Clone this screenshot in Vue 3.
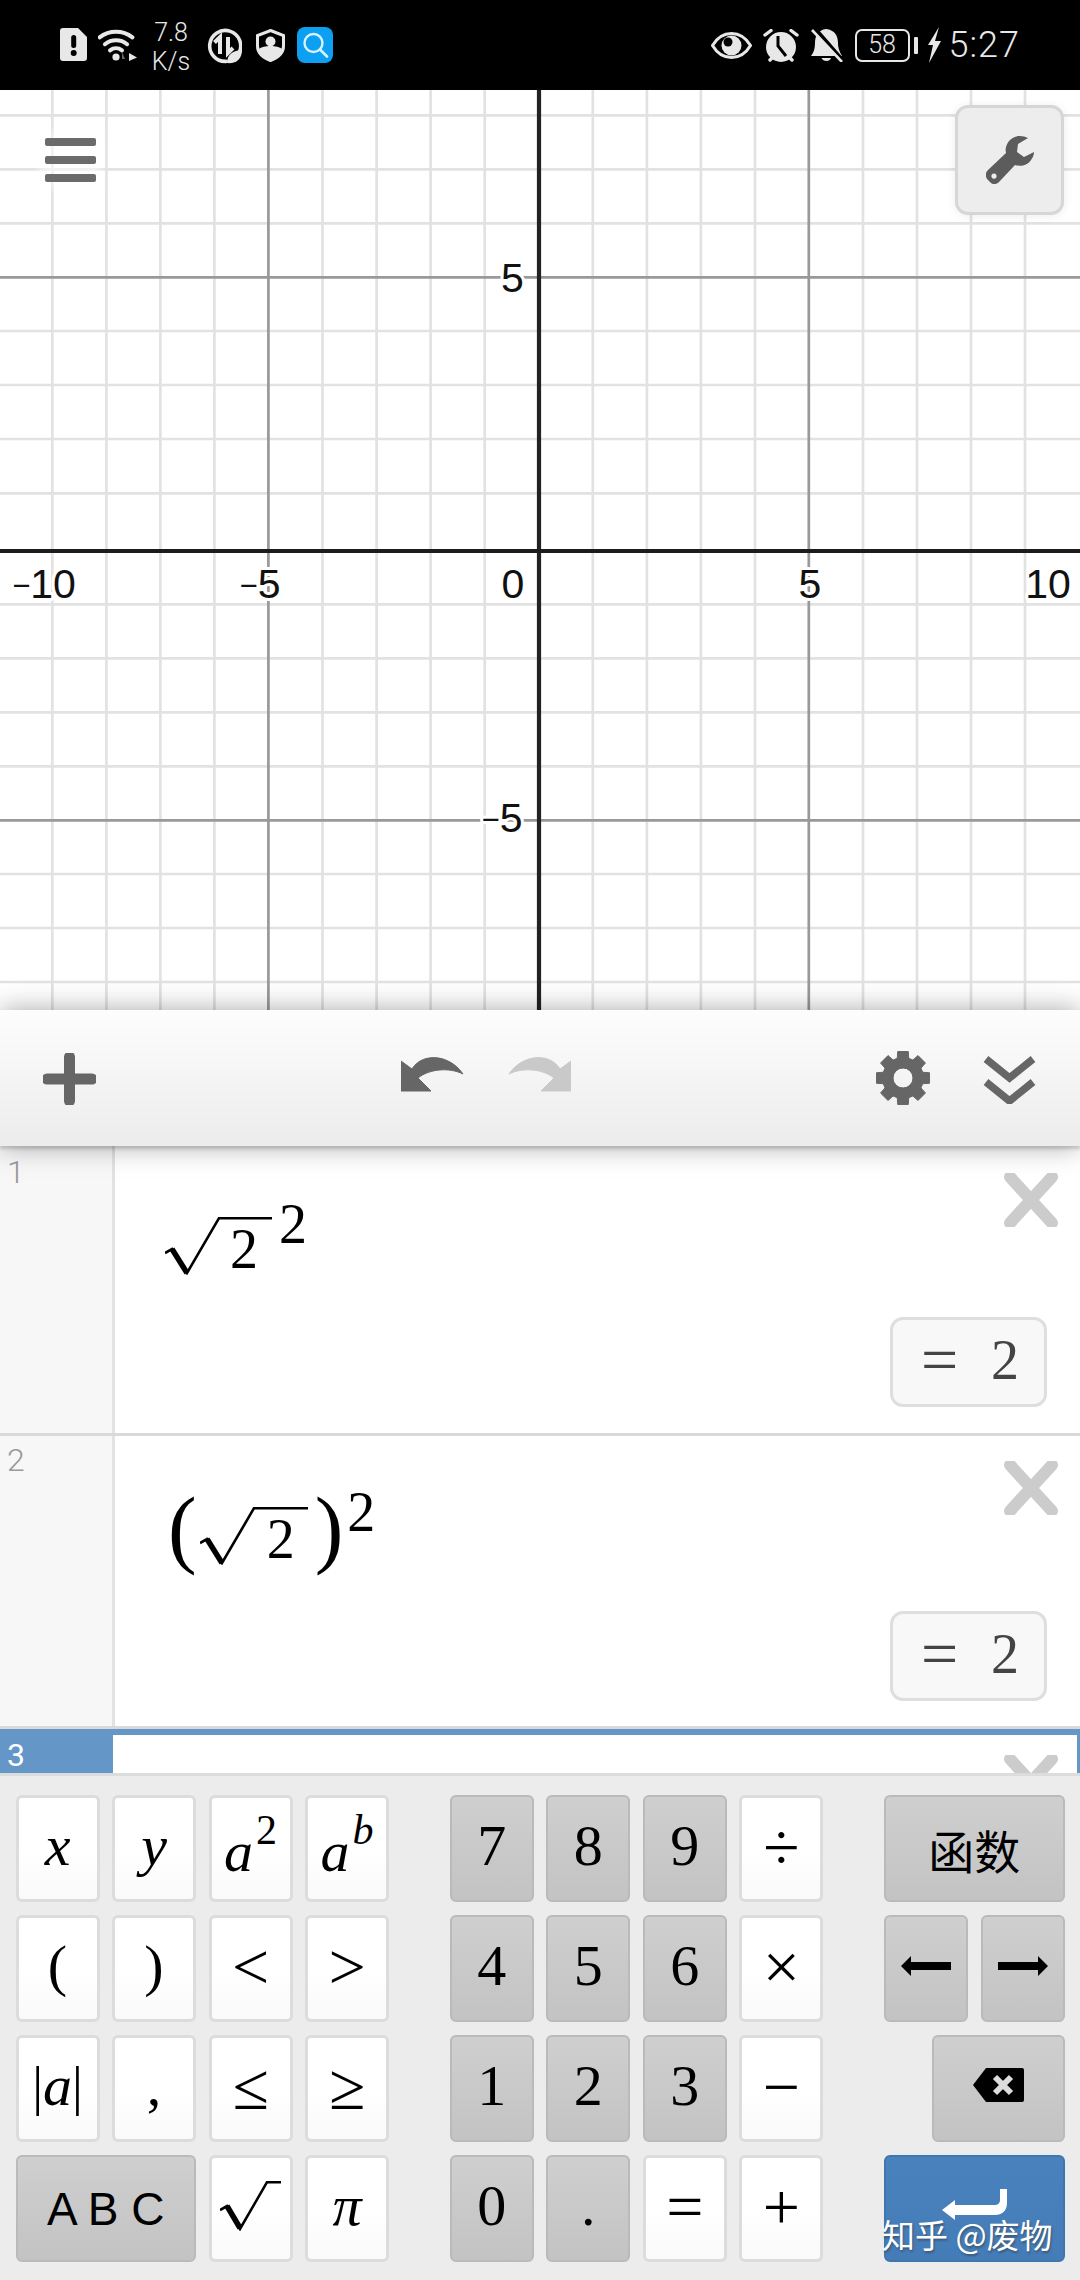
<script setup>
const verticalMinor = [52.3, 106.4, 160.4, 214.4, 322.5, 376.6, 430.6, 484.7, 592.8, 646.9, 700.9, 755, 863, 917, 971, 1025]
const verticalMajor = [268.4, 808.8]
const horizontalMinor = [115.3, 169.3, 223.3, 331, 385, 439, 493.4, 604.3, 658.3, 712.3, 766.3, 874, 928, 982]
const horizontalMajor = [277.4, 820.3]

const xLabels = [
  { t: '10', x: 44, neg: true },
  { t: '5', x: 260, neg: true },
  { t: '0', x: 513 },
  { t: '5', x: 810 },
  { t: '10', x: 1048 },
]
const yLabels = [
  { t: '5', x: 512.5, y: 292 },
  { t: '5', x: 502, y: 832, neg: true },
]

function gearPath() {
  const teeth = 8
  const c = 27
  let d = ''
  for (let i = 0; i < teeth; i++) {
    const a = (i / teeth) * Math.PI * 2 - Math.PI / 2
    const s = Math.PI / teeth
    const pts = [
      [a - s * 0.5, 27],
      [a + s * 0.5, 27],
      [a + s * 0.72, 20.5],
      [a + s * 1.28, 20.5],
    ]
    for (const [ang, r] of pts) {
      d += (d ? 'L' : 'M') + (c + r * Math.cos(ang)).toFixed(2) + ' ' + (c + r * Math.sin(ang)).toFixed(2)
    }
  }
  return d + 'Z M37 27 A10 10 0 1 0 17 27 A10 10 0 1 0 37 27Z'
}
const gear = gearPath()
</script>

<template>
  <div class="phone">
    <header class="status">
      <div class="status-left">
        <svg class="i-doc" width="27" height="33" viewBox="0 0 27 33">
          <path d="M3 0H18L27 9V30a3 3 0 0 1-3 3H3a3 3 0 0 1-3-3V3a3 3 0 0 1 3-3Z" fill="#e8e8e8" />
          <rect x="11.2" y="7" width="5" height="13" rx="2.5" fill="#000" />
          <circle cx="13.7" cy="25" r="3" fill="#000" />
        </svg>
        <svg class="i-wifi" width="40" height="33" viewBox="0 0 40 33">
          <g fill="none" stroke="#e8e8e8" stroke-width="4" stroke-linecap="round">
            <path d="M1.6 9.3A27 27 0 0 1 34.4 9.3" />
            <path d="M6.9 16.2A18 18 0 0 1 29.1 16.2" />
            <path d="M12 22.3A10 10 0 0 1 24 22.3" />
          </g>
          <circle cx="18" cy="29" r="3.6" fill="#e8e8e8" />
          <path d="M24 31V24L27 31Z" fill="#666" />
          <path d="M31 25L39 29.5L31 33Z" fill="#e8e8e8" />
        </svg>
        <div class="speed"><span>7.8</span><span>K/s</span></div>
        <svg class="i-data" width="36" height="36" viewBox="0 0 36 36">
          <path d="M33 25A15.5 15.5 0 1 0 20 33.4" fill="none" stroke="#e8e8e8" stroke-width="3.6" stroke-linecap="round" />
          <path d="M14 26V9L8.5 14.5M22 9V25L27 20" fill="none" stroke="#e8e8e8" stroke-width="4" />
          <path d="M21 35C21 27 27 22 36 22C36 31 30 36 21 35Z" fill="#e8e8e8" />
        </svg>
        <svg class="i-shield" width="29" height="33" viewBox="0 0 29 33">
          <path d="M14.5 1.5L27.5 6.5V17C27.5 25 20 29.5 14.5 31.5C9 29.5 1.5 25 1.5 17V6.5Z" fill="none" stroke="#e8e8e8" stroke-width="3" />
          <circle cx="14.5" cy="12.5" r="5" fill="#e8e8e8" />
          <path d="M3 20C7 16 22 16 26 20C25 26 18 30 14.5 31C11 30 4 26 3 20Z" fill="#e8e8e8" />
        </svg>
        <svg class="i-app" width="36" height="36" viewBox="0 0 36 36">
          <rect width="36" height="36" rx="8" fill="#0d9ff2" />
          <circle cx="16.5" cy="16" r="9" fill="none" stroke="#d4f4ff" stroke-width="2.4" />
          <path d="M23 22.5L30 29.5" stroke="#d4f4ff" stroke-width="2.6" stroke-linecap="round" />
        </svg>
      </div>
      <div class="status-right">
        <svg class="i-eye" width="41" height="27" viewBox="0 0 41 27">
          <path d="M1.5 13.5C11 -2.5 30 -2.5 39.5 13.5C30 29.5 11 29.5 1.5 13.5Z" fill="none" stroke="#e8e8e8" stroke-width="3" />
          <circle cx="20.5" cy="13.5" r="10" fill="#e8e8e8" />
          <circle cx="17" cy="10" r="4.5" fill="#000" />
        </svg>
        <svg class="i-alarm" width="36" height="33" viewBox="0 0 36 33">
          <circle cx="18" cy="18" r="15" fill="#e8e8e8" />
          <path d="M15 7V17L23 27" fill="none" stroke="#000" stroke-width="3" />
          <path d="M2 6L8 1.5M34 6L28 1.5M7 31L9.5 28.5M29 31L26.5 28.5" stroke="#e8e8e8" stroke-width="3.4" stroke-linecap="round" />
        </svg>
        <svg class="i-bell" width="32" height="33" viewBox="0 0 32 33">
          <path d="M15 0C24 1 27 7 27 14C27 20 29 23 31 27H0C3 23 4 19 4 14C4 7 7 1 15 0Z" fill="#e8e8e8" />
          <path d="M10.5 29H20C19 33 12 33 10.5 29Z" fill="#e8e8e8" />
          <path d="M4 0L31 31" stroke="#000" stroke-width="4.5" />
          <path d="M1 1L31 33" stroke="#e8e8e8" stroke-width="2.6" />
        </svg>
        <div class="battery">58</div>
        <div class="nub"></div>
        <svg class="i-bolt" width="14" height="36" viewBox="0 0 14 36">
          <path d="M12 0L1 18H6L2 36L14 14H8Z" fill="#e8e8e8" />
        </svg>
        <span class="clock">5:27</span>
      </div>
    </header>

    <section class="graph">
      <svg class="grid" width="1080" height="920" viewBox="0 90 1080 920">
        <line v-for="x in verticalMinor" :key="'vm' + x" :x1="x" :x2="x" y1="90" y2="1010" stroke="#e2e2e2" stroke-width="2.7" />
        <line v-for="y in horizontalMinor" :key="'hm' + y" :y1="y" :y2="y" x1="0" x2="1080" stroke="#e2e2e2" stroke-width="2.7" />
        <line v-for="x in verticalMajor" :key="'vM' + x" :x1="x" :x2="x" y1="90" y2="1010" stroke="#999" stroke-width="2.7" />
        <line v-for="y in horizontalMajor" :key="'hM' + y" :y1="y" :y2="y" x1="0" x2="1080" stroke="#999" stroke-width="2.7" />
        <line x1="539" x2="539" y1="90" y2="1010" stroke="#222" stroke-width="4.2" />
        <line x1="0" x2="1080" y1="551" y2="551" stroke="#1c1c1c" stroke-width="4" />
        <text v-for="l in xLabels" :key="'x' + l.t + l.x" class="tick" :x="l.x" y="598" text-anchor="middle"><tspan v-if="l.neg" class="minus" dy="-2">−</tspan><tspan :dy="l.neg ? 2 : 0">{{ l.t }}</tspan></text>
        <text v-for="l in yLabels" :key="'y' + l.t + l.y" class="tick" :x="l.x" :y="l.y" text-anchor="middle"><tspan v-if="l.neg" class="minus" dy="-2">−</tspan><tspan :dy="l.neg ? 2 : 0">{{ l.t }}</tspan></text>
      </svg>
      <div class="menu"><i></i><i></i><i></i></div>
      <div class="wrench">
        <svg width="48" height="48" viewBox="0 0 48 48">
          <path fill-rule="evenodd" d="M42 2C36-1 28-1 23 5C20 9 19 13 20 17L2 34C-1 37-1 41 2 44L5 47C8 49 11 48 13 46L29 29C35 31 42 29 45 24C47 21 48 19 48 16L38 21L31 16L32 8ZM8 37.5a2.6 2.6 0 1 0 .01 0Z" fill="#5c5c5c" />
        </svg>
      </div>
    </section>

    <section class="toolbar">
      <svg class="t-plus" width="53" height="52" viewBox="0 0 53 52">
        <path d="M26.5 4V48M4 26H49" stroke="#666" stroke-width="11" stroke-linecap="round" />
      </svg>
      <div class="t-history">
        <svg width="63" height="35" viewBox="0 0 63 35">
          <path d="M0 4V34H30L17 21C28 12 48 10 62 17C54 5 40-1 28 1C20 2 14 7 11 12Z" fill="#666" stroke="#666" stroke-linejoin="round" />
        </svg>
        <svg width="63" height="35" viewBox="0 0 63 35">
          <g transform="translate(63 0) scale(-1 1)">
            <path d="M0 4V34H30L17 21C28 12 48 10 62 17C54 5 40-1 28 1C20 2 14 7 11 12Z" fill="#c9c9c9" stroke="#c9c9c9" stroke-linejoin="round" />
          </g>
        </svg>
      </div>
      <div class="t-right">
        <svg width="54" height="54" viewBox="0 0 54 54"><path :d="gear" fill="#666" fill-rule="evenodd" stroke="#666" stroke-linejoin="round" /></svg>
        <svg width="53" height="48" viewBox="0 0 53 48">
          <path d="M3 3L26.5 22L50 3M3 26L26.5 45L50 26" fill="none" stroke="#666" stroke-width="7.5" />
        </svg>
      </div>
    </section>

    <section class="list">
      <div class="row row-1">
        <div class="gutter"><span class="num">1</span></div>
        <div class="expr e1">
          <div class="root">
            <svg width="107" height="58" viewBox="0 0 107 58">
              <path d="M0 36L7 32L22 56L54 1.2H107" fill="none" stroke="#000" stroke-width="2.6" />
              <path d="M7 32L22 56" stroke="#000" stroke-width="5.5" />
            </svg>
            <span class="digit in-root">2</span>
          </div>
          <span class="digit sup">2</span>
        </div>
        <div class="side">
          <svg class="del" width="54" height="54" viewBox="0 0 54 54"><path d="M6 4L48 50M48 4L6 50" stroke="#ccc" stroke-width="12" stroke-linecap="round" /></svg>
          <div class="answer"><span class="eq">=</span><span class="val">2</span></div>
        </div>
      </div>
      <div class="row row-2">
        <div class="gutter"><span class="num">2</span></div>
        <div class="expr e2">
          <span class="paren">(</span>
          <div class="root">
            <svg width="108" height="58" viewBox="0 0 108 58">
              <path d="M0 36L7 32L22 56L54 1.2H108" fill="none" stroke="#000" stroke-width="2.6" />
              <path d="M7 32L22 56" stroke="#000" stroke-width="5.5" />
            </svg>
            <span class="digit in-root">2</span>
          </div>
          <span class="paren close">)</span>
          <span class="digit sup">2</span>
        </div>
        <div class="side">
          <svg class="del" width="54" height="54" viewBox="0 0 54 54"><path d="M6 4L48 50M48 4L6 50" stroke="#ccc" stroke-width="12" stroke-linecap="round" /></svg>
          <div class="answer"><span class="eq">=</span><span class="val">2</span></div>
        </div>
      </div>
      <div class="row row-3">
        <div class="gutter active"><span class="num">3</span></div>
        <div class="expr"></div>
        <div class="side">
          <svg class="del" width="54" height="54" viewBox="0 0 54 54"><path d="M6 4L48 50M48 4L6 50" stroke="#ccc" stroke-width="12" stroke-linecap="round" /></svg>
        </div>
      </div>
    </section>

    <section class="keypad">
      <div class="group">
        <div class="key it">x</div>
        <div class="key it">y</div>
        <div class="key it pow"><span>a</span><span class="p p-2">2</span></div>
        <div class="key it pow"><span>a</span><span class="p p-b">b</span></div>
        <div class="key">(</div>
        <div class="key">)</div>
        <div class="key op">&lt;</div>
        <div class="key op">&gt;</div>
        <div class="key abs">|<em>a</em>|</div>
        <div class="key">,</div>
        <div class="key op">≤</div>
        <div class="key op">≥</div>
        <div class="key gray abc">A B C</div>
        <div class="key">
          <svg width="61" height="50" viewBox="0 0 61 50">
            <path d="M0 29L7 25L20 48L47 1.2H61" fill="none" stroke="#000" stroke-width="2.6" />
            <path d="M7 25L20 47" stroke="#000" stroke-width="5.5" />
          </svg>
        </div>
        <div class="key it">π</div>
      </div>
      <div class="group">
        <div class="key gray">7</div>
        <div class="key gray">8</div>
        <div class="key gray">9</div>
        <div class="key op">÷</div>
        <div class="key gray">4</div>
        <div class="key gray">5</div>
        <div class="key gray">6</div>
        <div class="key op">×</div>
        <div class="key gray">1</div>
        <div class="key gray">2</div>
        <div class="key gray">3</div>
        <div class="key op">−</div>
        <div class="key gray">0</div>
        <div class="key gray">.</div>
        <div class="key op">=</div>
        <div class="key op">+</div>
      </div>
      <div class="group right">
        <div class="key gray wide cjk">函数</div>
        <div class="key gray">
          <svg width="50" height="20" viewBox="0 0 50 20"><path d="M0 10L10 0V6H50V14H10V20Z" fill="#000" /></svg>
        </div>
        <div class="key gray">
          <svg width="50" height="20" viewBox="0 0 50 20"><path d="M50 10L40 0V6H0V14H40V20Z" fill="#000" /></svg>
        </div>
        <div class="key gray wide back">
          <svg width="51" height="34" viewBox="0 0 51 34">
            <path d="M0 17L13 0H49a2 2 0 0 1 2 2V32a2 2 0 0 1-2 2H13Z" fill="#000" />
            <path d="M22 9L38 25M38 9L22 25" stroke="#ddd" stroke-width="6" />
          </svg>
        </div>
        <div class="key wide enter">
          <svg width="65" height="32" viewBox="0 0 65 32">
            <path d="M0 21L13 11V16H52C56 16 58 14 58 11V0H65V14C65 22 60 26 53 26H13V31Z" fill="#fff" />
          </svg>
        </div>
      </div>
    </section>

    <div class="watermark">知乎 @废物</div>
  </div>
</template>

<style>
html, body { margin: 0; padding: 0; background: #fff; }
</style>

<style scoped>
.phone {
  position: relative;
  width: 1080px;
  height: 2280px;
  overflow: hidden;
  display: flex;
  flex-direction: column;
  font-family: "Liberation Serif", serif;
  background: #fff;
}
.status {
  height: 90px;
  flex: none;
  background: #000;
  color: #e8e8e8;
  display: flex;
  justify-content: space-between;
  padding: 0 60px 0 60px;
  box-sizing: border-box;
  font-family: Roboto, "Liberation Sans", sans-serif;
}
.status-left, .status-right { display: flex; align-items: flex-start; }
.i-doc, .i-wifi { margin-top: 28px; }
.i-wifi { margin-left: 11px; }
.speed {
  margin-left: 15px;
  width: 36px;
  margin-top: 18px;
  display: flex;
  flex-direction: column;
  align-items: center;
  font-size: 25px;
  line-height: 29px;
  font-weight: 300;
  white-space: nowrap;
}
.i-data { margin: 28px 0 0 17px; }
.i-shield { margin: 29px 0 0 14px; }
.i-app { margin: 27px 0 0 12px; }
.i-eye { margin-top: 32px; }
.i-alarm { margin: 29px 0 0 11px; }
.i-bell { margin: 29px 0 0 12px; }
.battery {
  margin: 29px 0 0 12px;
  width: 55px;
  height: 33px;
  box-sizing: border-box;
  border: 2.6px solid #e8e8e8;
  border-radius: 7px;
  font-size: 25px;
  font-weight: 300;
  line-height: 28px;
  text-align: center;
}
.nub {
  margin: 37px 0 0 4px;
  width: 4px;
  height: 17px;
  background: #e8e8e8;
  border-radius: 1px;
}
.i-bolt { margin: 27px 0 0 9px; }
.clock {
  margin: 24px 0 0 8px;
  font-size: 36px;
  line-height: 42px;
  font-weight: 300;
  letter-spacing: 1px;
}

.graph { position: relative; height: 920px; flex: none; overflow: hidden; }
.grid { display: block; }
.tick {
  font-family: "Liberation Sans", sans-serif;
  font-size: 41px;
  fill: #111;
  stroke: #fff;
  stroke-width: 6px;
  paint-order: stroke;
  stroke-linejoin: round;
}
.minus { font-size: 31px; }
.menu {
  position: absolute;
  left: 45px;
  top: 48px;
  width: 51px;
  display: flex;
  flex-direction: column;
  gap: 10.5px;
  background: rgba(255, 255, 255, .5);
  box-shadow: 0 0 8px 6px rgba(255, 255, 255, .5);
}
.menu i { display: block; height: 7.6px; background: #6b6b6b; border-radius: 2px; }
.wrench {
  position: absolute;
  left: 955px;
  top: 15px;
  width: 109px;
  height: 110px;
  box-sizing: border-box;
  border: 3px solid #d6d6d6;
  border-radius: 13px;
  background: #ededed;
  box-shadow: 0 1px 10px rgba(0, 0, 0, .08);
  display: flex;
  align-items: center;
  justify-content: center;
}

.toolbar {
  position: relative;
  z-index: 2;
  height: 136px;
  flex: none;
  box-sizing: border-box;
  background: linear-gradient(#fdfdfd, #ececec);
  box-shadow: 0 0 26px rgba(0, 0, 0, .35), 0 3px 3px rgba(0, 0, 0, .15);
  padding-left: 43px;
  display: flex;
  align-items: flex-start;
}
.t-plus { margin-top: 43px; }
.t-history { margin: 47px 0 0 305px; display: flex; gap: 44px; }
.t-right { margin: 41px 0 0 305px; display: flex; gap: 53px; align-items: flex-start; }
.t-right svg:last-child { margin-top: 5px; }

.list { flex: none; height: 627px; overflow: hidden; display: flex; flex-direction: column; }
.row { display: flex; flex: none; box-sizing: border-box; border-bottom: 3px solid #d9d9d9; }
.row-1 { height: 290px; }
.row-2 { height: 293px; }
.row-3 { height: 44px; border-bottom: 0; border-top: 6px solid #6497c8; border-right: 3px solid #6497c8; margin-top: 0; }
.gutter {
  width: 115px;
  flex: none;
  box-sizing: border-box;
  background: #f7f7f7;
  border-right: 3px solid #e2e2e2;
  padding-left: 7px;
}
.gutter.active { background: #6497c8; border-right: 0; margin-top: -6px; height: 44px; width: 113px; }
.num {
  font-family: Roboto, "Liberation Sans", sans-serif;
  font-weight: 300;
  font-size: 32px;
  line-height: 34px;
  color: #999;
  display: block;
  margin-top: 9px;
}
.row-2 .num { margin-top: 7px; }
.active .num { color: #fff; font-weight: 400; margin-top: 9px; }
.expr { flex: 1; display: flex; align-items: flex-start; color: #000; }
.e1 { padding-left: 50px; }
.e2 { padding-left: 53px; }
.root { position: relative; margin-top: 71px; flex: none; }
.root svg { display: block; }
.digit { font-size: 56px; line-height: 60px; color: #000; display: block; }
.in-root { position: absolute; left: 65px; top: 2px; }
.e2 .in-root { left: 67px; }
.sup { margin: 48px 0 0 7px; }
.e2 .root { margin-left: 3px; }
.e2 .sup { margin: 46px 0 0 4px; }
.paren { font-size: 86px; line-height: 86px; margin-top: 49px; }
.paren.close { margin-left: 7px; }
.side {
  width: 180px;
  flex: none;
  box-sizing: border-box;
  padding: 27px 33px 26px 0;
  display: flex;
  flex-direction: column;
  align-items: flex-end;
  justify-content: space-between;
}
.row-2 .side { padding: 25px 33px 25px 0; }
.row-3 .side { padding: 20px 30px 0 0; }
.del { display: block; margin-right: -11px; flex: none; }
.answer {
  width: 157px;
  height: 90px;
  box-sizing: border-box;
  border: 3px solid #dedede;
  border-radius: 13px;
  background: #f8f8f8;
  color: #444;
  font-size: 56px;
  line-height: 80px;
  display: flex;
  justify-content: space-between;
  align-items: center;
  padding: 0 25px 4px 28px;
}
.eq { font-size: 66px; }

.keypad {
  flex: none;
  height: 507px;
  box-sizing: border-box;
  background: #ececec;
  border-top: 3px solid #dcdcdc;
  padding: 19px 15.5px 0;
  display: flex;
  justify-content: space-between;
  color: #000;
}
.group {
  width: 373.5px;
  display: grid;
  grid-template-columns: repeat(4, 84px);
  grid-auto-rows: 107px;
  gap: 13px 12.5px;
}
.group.right { width: 180.5px; grid-template-columns: repeat(2, 84px); }
.key {
  box-sizing: border-box;
  border: 3px solid #dcdcdc;
  border-radius: 6px;
  background: linear-gradient(#fff 50%, #fafafa);
  display: flex;
  align-items: center;
  justify-content: center;
  padding-bottom: 6px;
  font-size: 58px;
  line-height: 60px;
}
.key.gray {
  border: 2px solid #bababa;
  background: linear-gradient(#cfcfcf, #c3c3c3);
}
.key.op { font-size: 66px; padding-bottom: 4px; }
.it { font-style: italic; }
.abs em { font-size: 58px; }
.abs { font-size: 54px; }
.abc {
  grid-column: span 2;
  font-family: "Liberation Sans", sans-serif;
  font-size: 46px;
  padding-bottom: 0;
}
.wide { grid-column: span 2; }
.key.cjk { font-family: "Noto Sans CJK SC", sans-serif; font-size: 46px; padding-bottom: 0; }
.key.back { width: 133px; justify-self: end; padding-bottom: 8px; }
.key.enter {
  background: linear-gradient(#4a82bd, #437cb7);
  border: 2px solid #3f76ae;
  padding-bottom: 7px;
}
.pow { padding-bottom: 0; padding-top: 6px; }
.p { font-size: 42px; line-height: 42px; margin-bottom: 44px; margin-left: 3px; font-style: normal; }
.p-b { font-style: italic; }
.watermark {
  position: absolute;
  left: 882px;
  top: 2212px;
  font-family: "Noto Sans CJK SC", sans-serif;
  font-size: 33px;
  line-height: 44px;
  color: #fff;
  text-shadow: 1px 2px 2px rgba(60, 60, 60, .55);
  white-space: nowrap;
}
</style>
